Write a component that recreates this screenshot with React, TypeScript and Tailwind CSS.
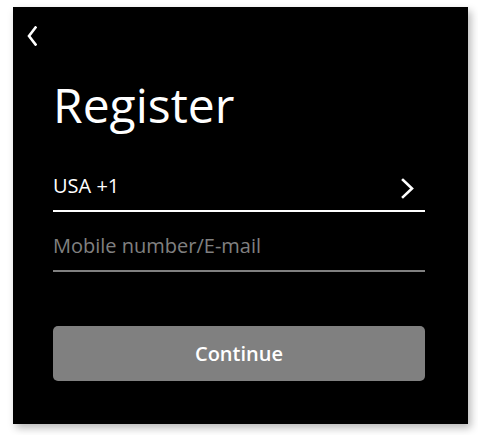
import React from "react";

export default function App() {
  return (
    <div className="w-[478px] h-[435px] bg-white pl-[13px] pt-[7px]" style={{ fontFamily: '"Open Sans", "Noto Sans", sans-serif' }}>
      <div className="w-[455px] h-[417px] bg-black flex flex-col shadow-[3px_4px_8px_rgba(0,0,0,0.28)]">
        <div className="ml-[14px] mt-[19px] h-[20px]">
          <svg width="10" height="20" viewBox="0 0 10 20" fill="none">
            <polyline points="8.5,1.5 2,10 8.5,18.5" stroke="white" strokeWidth="2.6" strokeLinecap="square" strokeLinejoin="miter" />
          </svg>
        </div>
        <div className="pl-[40px] pr-[43px] flex flex-col">
          <div className="mt-[35px] text-[48px] leading-none text-white">Register</div>
          <div className="mt-[47px] flex items-start justify-between border-b-2 border-white pb-[11px] pr-[11px]">
            <span className="text-[20px] leading-none text-white">USA +1</span>
            <svg className="mt-[2px]" width="13" height="21" viewBox="0 0 13 21" fill="none">
              <polyline points="2,2 11,10.5 2,19" stroke="white" strokeWidth="2.6" strokeLinecap="square" strokeLinejoin="miter" />
            </svg>
          </div>
          <div className="mt-[24px] border-b-2 border-[#808080] pb-[14px]">
            <span className="text-[20px] leading-none text-[#808080] block">Mobile number/E-mail</span>
          </div>
          <button className="mt-[54px] h-[55px] w-full rounded-[5px] bg-[#808080] text-white text-[20px] font-semibold flex items-center justify-center">
            Continue
          </button>
        </div>
      </div>
    </div>
  );
}
